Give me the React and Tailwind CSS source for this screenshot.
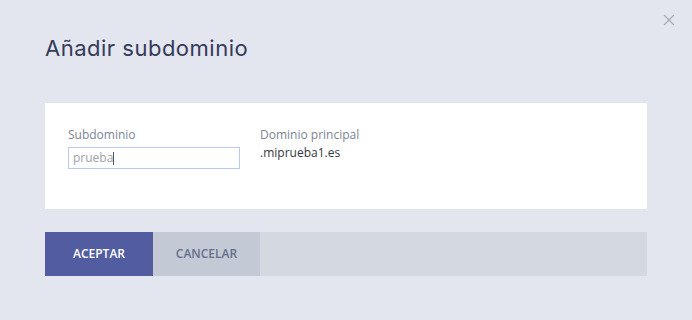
import React from 'react';

const App = () => {
  return (
    <div className="w-[692px] h-[320px] bg-[#e3e6ee] relative font-['Open_Sans',sans-serif] overflow-hidden">
      <button className="absolute right-[16px] top-[13px] w-[14px] h-[14px] flex items-center justify-center text-[#a6acb9]">
        <svg width="12" height="12" viewBox="0 0 12 12" fill="none" stroke="currentColor" strokeWidth="1.3">
          <path d="M1 1 L11 11 M11 1 L1 11" />
        </svg>
      </button>
      <div className="px-[45px] pt-[33px]">
        <h1 className="font-['Inter',sans-serif] text-[22px] leading-[30px] text-[#35395a] tracking-[0.5px]">
          Añadir subdominio
        </h1>
        <div className="mt-[40px] bg-white h-[106px] flex gap-[20px] pl-[23px] pt-[23px]">
          <div className="flex flex-col w-[172px]">
            <label className="text-[12px] leading-[17px] text-[#7d8496]">Subdominio</label>
            <div className="mt-[4px] h-[22px] border border-[#b9c8f2] flex items-center px-[4px]">
              <span className="text-[12px] text-[#9da2ad]">prueba</span>
              <span className="w-px h-[13px] bg-[#555]"></span>
            </div>
          </div>
          <div className="flex flex-col">
            <span className="text-[12px] leading-[17px] text-[#7d8496]">Dominio principal</span>
            <span className="mt-[1px] text-[12px] leading-[17px] text-[#33363f]">.miprueba1.es</span>
          </div>
        </div>
        <div className="mt-[23px] h-[44px] bg-[#d3d8e1] flex">
          <button className="w-[108px] h-full bg-[#515ca1] text-white text-[12px] font-semibold">ACEPTAR</button>
          <button className="w-[107px] h-full bg-[#c3c9d5] text-[#66708a] text-[12px] font-semibold">CANCELAR</button>
        </div>
      </div>
    </div>
  );
};

export default App;
